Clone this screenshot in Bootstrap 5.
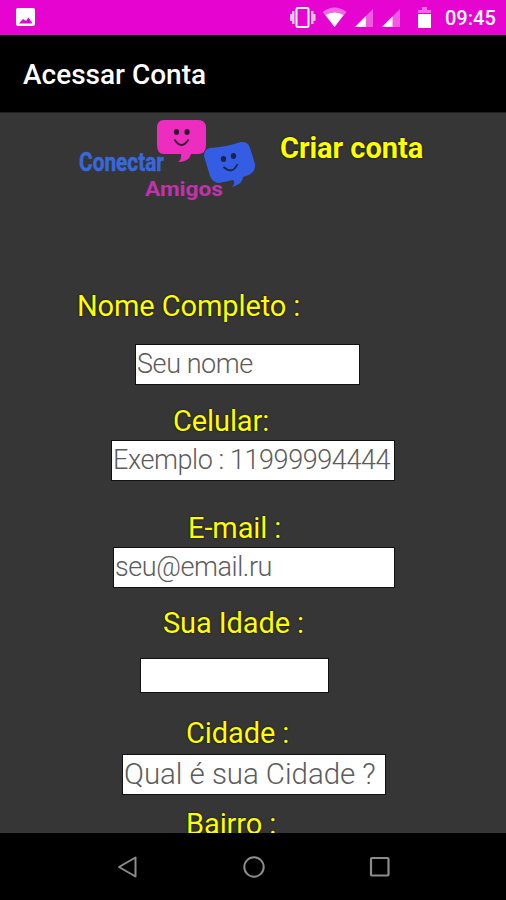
<!DOCTYPE html>
<html lang="pt-BR">
<head>
<meta charset="utf-8">
<meta name="viewport" content="width=device-width, initial-scale=1">
<title>Conectar Amigos</title>
<link href="https://cdn.jsdelivr.net/npm/bootstrap@5.3.0/dist/css/bootstrap.min.css" rel="stylesheet">
<style>
body { font-family: Roboto, "Liberation Sans", sans-serif; background: #000; }
.screen { width: 506px; height: 900px; }
.status { height: 35px; background: #e604d1; padding: 0 11px 0 16px; }
.clock { font-size: 20px; font-weight: 500; line-height: 36px; width: 50px; margin-left: 14px; }
.topbar { height: 78px; padding: 2px 0 0 23px; border-bottom: 1px solid #222; }
.topbar h1 { font-size: 28px; font-weight: 500; line-height: 34px; }
.page { height: 720px; background: #363636; }
.brand { height: 176px; padding-left: 70px; }
.brand h2 { font-size: 29px; font-weight: 700; color: #ff0; line-height: 34px; margin: 18px 0 0 10px; letter-spacing: -.05px; text-shadow: 0 0 2px #001; }
.field-label { display: block; font-size: 29px; line-height: 34px; height: 34px; color: #ff0; letter-spacing: -.1px; text-shadow: 0 0 2px #001; }
.field-input { display: block; height: 39px; padding: 0 1px; border: 0; border-radius: 0; background: #fff; font-size: 27px; font-weight: 300; letter-spacing: -.42px; color: #222; box-shadow: 0 0 0 1px #111; }
.field-input::placeholder { color: #5c5c5c; opacity: 1; }
.f-nome { margin-left: 77px; } .i-nome { width: 223px; margin: 22px 0 20px 136px; }
.f-cel { margin-left: 173px; } .i-cel { width: 282px; margin: 3px 0 31px 112px; }
.f-mail { margin-left: 188px; } .i-mail { width: 280px; margin: 3px 0 19px 114px; }
.f-idade { margin-left: 163px; } .i-idade { width: 187px; height: 33px; margin: 19px 0 24px 141px; }
.f-cidade { margin-left: 186px; } .i-cidade { width: 262px; margin: 5px 0 13px 123px; font-size: 29.5px; letter-spacing: -.05px; }
.f-bairro { margin-left: 186px; }
.softnav { height: 67px; padding: 0 115px 0 116px; }
</style>
</head>
<body>
<div class="screen d-flex flex-column overflow-hidden">
  <div class="status d-flex align-items-center text-white flex-shrink-0">
    <svg width="20" height="35" viewBox="16 0 20 35" class="me-auto"><path fill="#fff" fill-rule="evenodd" d="M18 8h15q2 0 2 2v14q0 2-2 2H18q-2 0-2-2V10q0-2 2-2zM19 23.500h13.500l-4-6-2.500 3.500-3-2z"/></svg>
    <svg width="142" height="35" viewBox="289 0 142 35" fill="#fff">
      <rect x="296.500" y="8" width="12" height="19" rx="1.500" fill="none" stroke="#fff" stroke-width="2"/>
      <path d="M292 11h2.500v13H292zM311 11h2.500v13H311zM290 14h2v7h-2zM313.500 14h2v7h-2z" opacity=".75"/>
      <path d="M322.500 12Q334.500 3 346.500 12L334.500 27z" opacity=".4"/>
      <path d="M325.500 15Q334.500 10 343.500 15L334.500 27z"/>
      <path d="M373 9v18h-18z" opacity=".35"/><path d="M366 16v11h-11z"/>
      <path d="M400 9v18h-18z" opacity=".35"/><path d="M392.500 16.500V27H382z"/>
      <path d="M418 13v-3h4V7h5v3h4v3z" opacity=".4"/><path d="M418 14h13v14h-13z"/>
    </svg>
    <span class="clock text-nowrap">09:45</span>
  </div>
  <header class="topbar d-flex align-items-center flex-shrink-0 bg-black text-white"><h1 class="m-0 text-nowrap">Acessar Conta</h1></header>
  <main class="page overflow-hidden flex-shrink-0">
    <div class="brand d-flex align-items-start">
      <svg width="200" height="97" viewBox="70 113 200 97" class="flex-shrink-0" role="img">
        <path fill="#ed2dc0" d="M164 120h34q8 0 8 8v17q0 9-8 9h-7q-2 8-13 8 4-3 3-8h-17q-7 0-7-9v-17q0-8 7-8z"/>
        <g fill="#34152f"><ellipse cx="176.500" cy="132" rx="2.600" ry="3"/><ellipse cx="187" cy="132" rx="2.600" ry="3"/></g>
        <path d="M174.500 139.500q7 11 14 0" fill="none" stroke="#34152f" stroke-width="1.800"/>
        <path fill="#355de4" d="M210 148q16-1 31-6 7-1 9 6l5 16q1 7-6 11l-6 2q0 7-11 10 4-4 1-7l-14 3q-6 0-9-7l-6-20q0-7 6-8z"/>
        <g fill="#17254d"><ellipse cx="223.500" cy="159" rx="2.700" ry="3"/><ellipse cx="233.500" cy="156" rx="2.700" ry="3"/></g>
        <path d="M223.500 167q9 8 14-3" fill="none" stroke="#17254d" stroke-width="1.800"/>
        <text x="79" y="170.500" textLength="85" lengthAdjust="spacingAndGlyphs" font-family="Roboto, sans-serif" font-weight="700" font-size="25.500" fill="#3968db" stroke="#3968db" stroke-width=".5">Conectar</text>
        <text x="145" y="195.500" textLength="78" lengthAdjust="spacingAndGlyphs" font-family="Roboto, sans-serif" font-weight="700" font-size="19.500" fill="#c133aa">Amigos</text>
      </svg>
      <h2 class="text-nowrap">Criar conta</h2>
    </div>
    <form>
      <label class="field-label f-nome" for="nome">Nome Completo :</label>
      <input class="field-input i-nome" id="nome" type="text" placeholder="Seu nome">
      <label class="field-label f-cel" for="cel">Celular:</label>
      <input class="field-input i-cel" id="cel" type="tel" placeholder="Exemplo : 11999994444">
      <label class="field-label f-mail" for="mail">E-mail :</label>
      <input class="field-input i-mail" id="mail" type="email" placeholder="seu@email.ru">
      <label class="field-label f-idade" for="idade">Sua Idade :</label>
      <input class="field-input i-idade" id="idade" type="text">
      <label class="field-label f-cidade" for="cidade">Cidade :</label>
      <input class="field-input i-cidade" id="cidade" type="text" placeholder="Qual é sua Cidade ?">
      <label class="field-label f-bairro">Bairro :</label>
    </form>
  </main>
  <nav class="softnav d-flex align-items-center justify-content-between flex-shrink-0 bg-black">
    <svg width="22" height="24" viewBox="0 0 22 24" fill="none" stroke="#8c8c8c" stroke-width="2" stroke-linejoin="round"><path d="M19.500 2.500v19L3 12z"/></svg>
    <svg width="24" height="24" viewBox="0 0 24 24" fill="none" stroke="#8c8c8c" stroke-width="2"><circle cx="12" cy="12" r="9.700"/></svg>
    <svg width="22" height="22" viewBox="0 0 22 22" fill="none" stroke="#8c8c8c" stroke-width="2.200"><rect x="2" y="2" width="17.500" height="17.500" rx="1"/></svg>
  </nav>
</div>
<script src="https://cdn.jsdelivr.net/npm/bootstrap@5.3.0/dist/js/bootstrap.bundle.min.js"></script>
</body>
</html>
